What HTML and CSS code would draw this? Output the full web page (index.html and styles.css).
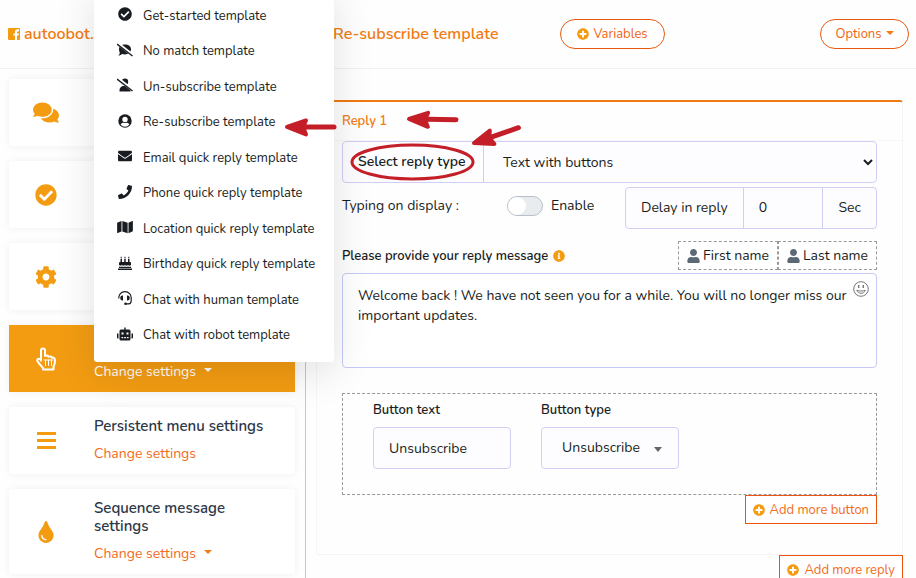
FILE: index.html
```html
<!DOCTYPE html>
<html lang="en">
<head>
    <meta charset="UTF-8">
    <meta name="viewport" content="width=device-width, initial-scale=1.0">
    <title>Re-subscribe template</title>
    <link rel="stylesheet" href="styles.css">
</head>
<body>
    <!-- Shared icons -->
    <svg class="sprite" aria-hidden="true">
        <symbol id="i-check" viewBox="0 0 512 512"><path d="M504 256c0 136.967-111.033 248-248 248S8 392.967 8 256 119.033 8 256 8s248 111.033 248 248zM227.314 387.314l184-184c6.248-6.248 6.248-16.379 0-22.627l-22.627-22.627c-6.248-6.249-16.379-6.249-22.628 0L216 308.118l-70.059-70.059c-6.248-6.248-16.379-6.248-22.628 0l-22.627 22.627c-6.248 6.248-6.248 16.379 0 22.627l104 104c6.249 6.249 16.379 6.249 22.628.001z"/></symbol>
        <symbol id="i-plus" viewBox="0 0 512 512"><path d="M256 8C119 8 8 119 8 256s111 248 248 248 248-111 248-248S393 8 256 8zm144 276c0 6.600-5.400 12-12 12h-92v92c0 6.600-5.400 12-12 12h-56c-6.600 0-12-5.400-12-12v-92h-92c-6.600 0-12-5.400-12-12v-56c0-6.600 5.400-12 12-12h92v-92c0-6.600 5.400-12 12-12h56c6.600 0 12 5.400 12 12v92h92c6.600 0 12 5.400 12 12v56z"/></symbol>
        <symbol id="i-user" viewBox="0 0 448 512"><path d="M224 256c70.700 0 128-57.300 128-128S294.700 0 224 0 96 57.300 96 128s57.300 128 128 128zm89.600 32h-16.700c-22.200 10.200-46.900 16-72.900 16s-50.600-5.800-72.900-16h-16.700C60.200 288 0 348.200 0 422.400V464c0 26.500 21.500 48 48 48h352c26.500 0 48-21.500 48-48v-41.600c0-74.200-60.200-134.400-134.400-134.400z"/></symbol>
    </svg>

    <header class="topbar">
        <a class="brand" href="#">
            <svg class="brand-icon" viewBox="0 0 24 24"><path fill-rule="evenodd" d="M2 0h20a2 2 0 0 1 2 2v20a2 2 0 0 1-2 2h-4v-9h3l1-4h-4V9c0-1 1-2 2-2h2V3c-5-1-8 1-8 5v3h-3v4h3v9H2a2 2 0 0 1-2-2V2a2 2 0 0 1 2-2z"/></svg>
            autoobot.
        </a>
        <h1 class="page-title">Re-subscribe template</h1>
        <button class="pill" type="button"><svg class="icon-sm"><use href="#i-plus"/></svg> Variables</button>
        <button class="pill pill-options" type="button">Options <span class="caret"></span></button>
    </header>

    <div class="layout">
        <aside class="sidebar">
            <div class="card">
                <div class="card-icon"><svg width="26" height="23" viewBox="0 0 576 512"><path d="M416 192c0-88.400-93.100-160-208-160S0 103.600 0 192c0 34.300 14.100 65.900 38 92-13.400 30.200-35.500 54.200-35.800 54.500-2.200 2.300-2.800 5.700-1.500 8.700S4.800 352 8 352c36.600 0 66.900-12.300 88.700-25 32.200 15.700 70.300 25 111.300 25 114.900 0 208-71.600 208-160zm122 220c23.900-26 38-57.700 38-92 0-66.900-53.500-124.200-129.300-148.100.9 6.600 1.300 13.300 1.300 20.100 0 105.900-107.700 192-240 192-10.800 0-21.300-.8-31.700-1.900C207.800 439.600 281.800 480 368 480c41 0 79.100-9.200 111.300-25 21.800 12.700 52.100 25 88.700 25 3.200 0 6.100-1.900 7.300-4.800 1.300-2.900.7-6.300-1.500-8.700-.3-.3-22.400-24.200-35.800-54.500z"/></svg></div>
            </div>
            <div class="card">
                <div class="card-icon"><svg width="22" height="22"><use href="#i-check"/></svg></div>
            </div>
            <div class="card">
                <div class="card-icon"><svg width="22" height="22" viewBox="0 0 512 512"><path d="M487.400 315.700l-42.600-24.600c4.300-23.200 4.300-47 0-70.200l42.600-24.600c4.900-2.800 7.100-8.600 5.500-14-11.100-35.600-30-67.800-54.700-94.600-3.800-4.100-10-5.100-14.800-2.300L380.800 110c-17.900-15.400-38.500-27.300-60.800-35.100V25.800c0-5.600-3.900-10.500-9.400-11.700-36.700-8.200-74.300-7.800-109.200 0-5.500 1.200-9.400 6.100-9.400 11.700V75c-22.200 7.900-42.800 19.800-60.800 35.100L88.700 85.500c-4.900-2.800-11-1.900-14.800 2.300-24.700 26.700-43.600 58.900-54.700 94.600-1.700 5.400.6 11.200 5.500 14L67.300 221c-4.300 23.200-4.300 47 0 70.200l-42.600 24.600c-4.900 2.800-7.100 8.600-5.500 14 11.100 35.600 30 67.800 54.700 94.600 3.800 4.100 10 5.100 14.800 2.300l42.600-24.600c17.900 15.400 38.500 27.300 60.800 35.100v49.200c0 5.600 3.900 10.500 9.400 11.700 36.700 8.200 74.300 7.800 109.200 0 5.500-1.200 9.400-6.100 9.400-11.700v-49.200c22.200-7.900 42.800-19.800 60.800-35.100l42.600 24.600c4.900 2.800 11 1.900 14.800-2.300 24.700-26.700 43.600-58.900 54.700-94.600 1.500-5.500-.7-11.300-5.600-14.100zM256 336c-44.100 0-80-35.900-80-80s35.900-80 80-80 80 35.900 80 80-35.900 80-80 80z"/></svg></div>
            </div>
            <div class="card card-active">
                <div class="card-icon"><svg width="22" height="24" viewBox="0 0 22 24" fill="none" stroke="#fff" stroke-width="2" stroke-linejoin="round" stroke-linecap="round"><path d="M6 13V3.500a2 2 0 0 1 4 0V9c1.500-1 3-.6 3.500.8 1.500-.8 3-.3 3.300 1 1.700-.6 3.200.3 3.200 2.200 0 4-1 5-1.500 7v2.500H8V21c-1.500-2-4-4.300-5.500-6.800-1-2 1.200-3.600 3.500-1.200z"/><path stroke-width="1" d="M6 12.500v2M10.500 13v5.500M13.500 13v5.500M16.500 13v5.500M9 13h9"/></svg></div>
                <div class="card-body">
                    <button class="card-link" type="button">Change settings <span class="caret"></span></button>
                </div>
                <nav class="dropdown">
                    <a href="#"><svg><use href="#i-check"/></svg>Get-started template</a>
                    <a href="#"><svg class="wide" viewBox="0 0 16 13"><path d="M8 1c3.500 0 6 2 6 4.800S11.500 11 8 11c-1 0-2-.2-2.800-.5C4.200 11.300 3 12 1.500 12c.8-1 1.300-1.800 1.300-2.800C2.200 8.300 2 7 2 5.800 2 3 4.500 1 8 1z"/><path stroke="#fff" stroke-width="3" d="M1 0l15 12"/><path stroke="#191d21" stroke-width="1.400" d="M0 .5L15.500 12.500"/></svg>No match template</a>
                    <a href="#"><svg class="wide" viewBox="0 0 16 13"><circle cx="8" cy="3.200" r="3.200"/><path d="M2.500 13v-1.500c0-2.200 1.800-4 4-4h3c2.200 0 4 1.800 4 4V13z"/><path stroke="#fff" stroke-width="3" d="M1 0l15 12"/><path stroke="#191d21" stroke-width="1.400" d="M0 .5L15.500 12.500"/></svg>Un-subscribe template</a>
                    <a href="#"><svg viewBox="0 0 14 14"><circle cx="7" cy="7" r="6.700"/><circle cx="7" cy="5.500" r="2.700" fill="#fff"/><path fill="#fff" d="M2.600 10.500C3.300 9.200 4.500 8.700 5.500 8.800c1 .4 2 .4 3 0 1-.1 2.200.4 2.900 1.700a5.300 5.300 0 0 1-8.800 0z"/></svg>Re-subscribe template</a>
                    <a href="#"><svg viewBox="0 0 512 512"><path d="M502.300 190.800c3.900-3.100 9.700-.2 9.700 4.700V400c0 26.500-21.500 48-48 48H48c-26.500 0-48-21.500-48-48V195.600c0-5 5.700-7.800 9.700-4.700 22.400 17.400 52.100 39.500 154.100 113.600 21.100 15.400 56.700 47.800 92.200 47.600 35.700.3 72-32.800 92.300-47.600 102-74.100 131.600-96.300 154-113.700zM256 320c23.200.4 56.600-29.200 73.400-41.400 132.700-96.300 142.800-104.700 173.400-128.700 5.800-4.500 9.200-11.500 9.200-18.900v-19c0-26.500-21.500-48-48-48H48c-26.500 0-48 21.500-48 48v19c0 7.400 3.400 14.300 9.200 18.900 30.600 23.900 40.700 32.400 173.400 128.700 16.800 12.200 50.200 41.800 73.400 41.400z"/></svg>Email quick reply template</a>
                    <a href="#"><svg viewBox="0 0 512 512"><path d="M493.400 24.600l-104-24c-11.300-2.600-22.900 3.300-27.500 13.900l-48 112c-4.200 9.800-1.400 21.300 6.900 28l60.600 49.600c-36 76.700-98.900 140.500-177.200 177.200l-49.600-60.600c-6.800-8.300-18.200-11.100-28-6.900l-112 48C3.900 366.500-2 378.100.6 389.400l24 104C27.100 504.200 36.700 512 48 512c256.100 0 464-207.500 464-464 0-11.200-7.700-20.900-18.600-23.400z"/></svg>Phone quick reply template</a>
                    <a href="#"><svg class="wide" viewBox="0 0 576 512"><path d="M0 117.660v346.320c0 11.320 11.430 19.060 21.940 14.860L160 416V32L20.120 87.950A32.006 32.006 0 0 0 0 117.660zM192 416l192 64V96L192 32v384zM554.060 33.160L416 96v384l139.880-55.950A31.996 31.996 0 0 0 576 394.340V48.020c0-11.320-11.430-19.060-21.940-14.860z"/></svg>Location quick reply template</a>
                    <a href="#"><svg viewBox="0 0 14 14"><path d="M2.500 3h1.500v3h2.200V3h1.500v3H10V3h1.500v3h.5a1 1 0 0 1 1 1v2c-1 1-2 1-3 0-1 1-2 1-3 0-1 1-2 1-3 0-1 1-2 1-3 0V7a1 1 0 0 1 1-1h.5zM1 10.500c1 .6 2 .6 3 0 1 .6 2 .6 3 0 1 .6 2 .6 3 0 1 .6 2 .6 3 0V12H1zM0 12.500h14V14H0zM2.700 2.500V.8h1v1.700zM6.500 2.500V.8h1v1.700zM10.300 2.500V.8h1v1.700z"/></svg>Birthday quick reply template</a>
                    <a href="#"><svg viewBox="0 0 14 14"><path fill="none" stroke="#191d21" stroke-width="1.200" d="M.8 7.500C.5 3.500 3.200.7 7 .7s6.500 2.800 6.200 6.800v2.300c0 1.700-1 3-2.500 3H7.500"/><path d="M5 4.500v5H4A2 2 0 0 1 2.300 7.500V6.500A2 2 0 0 1 4 4.500zM9 4.500v5h1a2 2 0 0 0 1.700-2V6.500a2 2 0 0 0-1.700-2z"/><circle cx="7.500" cy="12.700" r="1.300"/></svg>Chat with human template</a>
                    <a href="#"><svg class="wide" viewBox="0 0 16 13"><path fill-rule="evenodd" d="M7.300 0h1.400v2H12a1.500 1.500 0 0 1 1.500 1.500v8A1.500 1.500 0 0 1 12 13H4a1.500 1.500 0 0 1-1.500-1.500v-8A1.500 1.500 0 0 1 4 2h3.300zM4.500 5v2h2V5zM9.500 5v2h2V5zM4.500 9.500v1.200h1.700V9.500zM7.200 9.500v1.200h1.700V9.500zM9.900 9.500v1.200h1.700V9.500zM0 6h1.500v5H.8a.8.8 0 0 1-.8-.8zM14.500 6H16v4.200a.8.8 0 0 1-.8.8h-.7z"/></svg>Chat with robot template</a>
                </nav>
            </div>
            <div class="card">
                <div class="card-icon"><svg width="19" height="18" viewBox="0 0 19 18"><path d="M0 0h19v3H0zM0 7h19v3H0zM0 14h19v3H0z"/></svg></div>
                <div class="card-body">
                    <h2 class="card-title">Persistent menu settings</h2>
                    <a class="card-link" href="#">Change settings</a>
                </div>
            </div>
            <div class="card">
                <div class="card-icon"><svg width="16" height="22" viewBox="0 0 352 512"><path d="M205.220 22.090c-7.940-28.780-49.440-30.120-58.440 0C100.010 179.850 0 222.720 0 333.910 0 432.350 78.720 512 176 512s176-79.650 176-178.090c0-111.750-99.790-153.340-146.780-311.820zM176 448c-61.750 0-112-50.250-112-112 0-8.840 7.160-16 16-16s16 7.160 16 16c0 44.110 35.890 80 80 80 8.840 0 16 7.160 16 16s-7.160 16-16 16z"/></svg></div>
                <div class="card-body">
                    <h2 class="card-title">Sequence message settings</h2>
                    <button class="card-link" type="button">Change settings <span class="caret"></span></button>
                </div>
            </div>
        </aside>

        <main class="content">
            <section class="reply">
                <h2 class="reply-title">Reply 1</h2>
                <div class="reply-body">
                    <div class="group">
                        <label class="addon addon-bold" for="replyType">Select reply type</label>
                        <select class="group-select" id="replyType">
                            <option>Text with buttons</option>
                        </select>
                    </div>

                    <div class="typing-row">
                        <span class="typing-label">Typing on display :</span>
                        <label class="switch">
                            <input type="checkbox">
                            <span class="track"></span>
                            Enable
                        </label>
                        <div class="group delay">
                            <label class="addon" for="delay">Delay in reply</label>
                            <input class="group-input" id="delay" type="text" value="0">
                            <span class="addon">Sec</span>
                        </div>
                    </div>

                    <div class="message-head">
                        <label class="field-label" for="message">Please provide your reply message
                            <svg class="icon-sm" viewBox="0 0 512 512"><path d="M256 8C119.043 8 8 119.083 8 256c0 136.997 111.043 248 248 248s248-111.003 248-248C504 119.083 392.957 8 256 8zm0 110c23.196 0 42 18.804 42 42s-18.804 42-42 42-42-18.804-42-42 18.804-42 42-42zm56 254c0 6.627-5.373 12-12 12h-88c-6.627 0-12-5.373-12-12v-24c0-6.627 5.373-12 12-12h12v-64h-12c-6.627 0-12-5.373-12-12v-24c0-6.627 5.373-12 12-12h64c6.627 0 12 5.373 12 12v100h12c6.627 0 12 5.373 12 12v24z"/></svg>
                        </label>
                        <div class="name-buttons">
                            <button type="button"><svg><use href="#i-user"/></svg>First name</button>
                            <button type="button"><svg><use href="#i-user"/></svg>Last name</button>
                        </div>
                    </div>
                    <div class="message">
                        <textarea id="message">Welcome back ! We have not seen you for a while. You will no longer miss our important updates.</textarea>
                        <button class="emoji" type="button" aria-label="Emoji"><svg viewBox="0 0 16 16" fill="none" stroke="#777"><circle cx="8" cy="8" r="7.300"/><path d="M5.700 4v3M10.300 4v3" stroke-width="1.400"/><path d="M3.800 9.300c1.200 4 7.200 4 8.400 0-2.400 1-6 1-8.400 0z"/></svg></button>
                    </div>

                    <div class="button-box">
                        <div class="field">
                            <label class="field-label" for="buttonText">Button text</label>
                            <input class="control" id="buttonText" type="text" value="Unsubscribe">
                        </div>
                        <div class="field">
                            <label class="field-label" for="buttonType">Button type</label>
                            <div class="select-wrap">
                                <select class="control" id="buttonType">
                                    <option>Unsubscribe</option>
                                </select>
                            </div>
                        </div>
                    </div>
                    <button class="add-button" type="button"><svg class="icon-sm"><use href="#i-plus"/></svg> Add more button</button>
                </div>
            </section>
            <button class="add-button" type="button"><svg class="icon-sm"><use href="#i-plus"/></svg> Add more reply</button>
        </main>
    </div>

    <!-- Hint arrows drawn over the page -->
    <svg class="hints" aria-hidden="true">
        <ellipse cx="412.500" cy="162" rx="60.500" ry="17"/>
        <g id="arrow"><path class="shaft" d="M306 127H334"/><path class="head" d="M287 127L306 120.500Q302 127 306 134.500Z"/></g>
        <use href="#arrow" transform="translate(122 -8) rotate(1 287 127)"/>
        <use href="#arrow" transform="translate(187 16) rotate(-19 287 127)"/>
    </svg>
</body>
</html>
```
FILE: styles.css
```css
* {
    box-sizing: border-box;
}

body {
    margin: 0;
    background: #fefefe;
    color: #191d21;
    font-family: "Nunito", "Open Sans", sans-serif;
    font-size: 14px;
    line-height: 20px;
}

button, input, select, textarea {
    margin: 0;
    font: inherit;
    color: inherit;
}

button {
    cursor: pointer;
}

a {
    text-decoration: none;
}

svg {
    flex-shrink: 0;
}

.sprite {
    display: none;
}

.icon-sm {
    width: 12px;
    height: 12px;
    fill: #f39c12;
}

.caret {
    margin-bottom: 3px;
    border: 4px solid transparent;
    border-top-color: currentColor;
    border-bottom: 0;
}

/* Top bar */
.topbar {
    display: flex;
    align-items: center;
    height: 69px;
    padding: 0 7px 0 8px;
    border-bottom: 1px solid #f2f2f4;
}

.brand {
    display: flex;
    align-items: center;
    gap: 4px;
    width: 325px;
    color: #f07c12;
    font-size: 16px;
    font-weight: 600;
}

.brand-icon {
    width: 12px;
    height: 12px;
    fill: #f39c12;
}

.page-title {
    margin: 0;
    width: 227px;
    color: #f07c12;
    font-size: 16px;
    font-weight: 600;
    white-space: nowrap;
}

.pill {
    display: flex;
    align-items: center;
    justify-content: center;
    gap: 4px;
    width: 105px;
    height: 30px;
    border: 1px solid #e9590c;
    border-radius: 15px;
    background: #fff;
    color: #f06414;
    font-size: 13px;
}

.pill-options {
    width: 89px;
    margin-left: auto;
}

.pill-options .caret {
    color: #f07c12;
}

.layout {
    display: grid;
    grid-template-columns: 306px 1fr;
}

/* Sidebar */
.sidebar {
    display: flex;
    flex-direction: column;
    gap: 15px;
    padding: 10px 10px 4px 9px;
    border-right: 1px solid #c3c6ca;
}

.card {
    position: relative;
    display: flex;
    align-items: center;
    min-height: 67px;
    padding: 10px 15px 10px 0;
    border-radius: 3px;
    background: #fff;
    box-shadow: 0 0 8px rgba(0, 0, 0, 0.06);
}

.card-icon {
    display: flex;
    justify-content: center;
    flex: 0 0 74px;
    fill: #f39c12;
}

.card-body {
    padding-left: 11px;
}

.card-title {
    margin: 0 0 8px;
    color: #2d3748;
    font-size: 15px;
    font-weight: 600;
    line-height: 18px;
}

.card-link {
    display: flex;
    align-items: center;
    gap: 8px;
    padding: 0;
    border: 0;
    background: none;
    color: #f06c1c;
    line-height: 21px;
}

.card-link .caret {
    color: #f07c12;
}

.card-active {
    border-radius: 0;
    background: #f39c12;
}

.card-active .card-body {
    align-self: flex-end;
}

.card-active .card-link,
.card-active .caret {
    color: #fff;
}

/* Template menu, opens upwards from the active card */
.dropdown {
    position: absolute;
    z-index: 2;
    left: 85px;
    bottom: 30px;
    display: grid;
    grid-template-rows: repeat(10, 1fr);
    width: 240px;
    height: 375px;
    padding: 11px 0 9px;
    border-radius: 3px;
    background: #fff;
    box-shadow: 0 10px 40px rgba(0, 0, 0, 0.12);
}

.dropdown a {
    display: grid;
    grid-template-columns: 16px 1fr;
    align-items: center;
    gap: 10px;
    padding-left: 23px;
    color: #191d21;
    font-size: 13px;
    white-space: nowrap;
}

.dropdown svg {
    width: 14px;
    height: 14px;
    margin-bottom: 3px;
    justify-self: center;
    fill: #191d21;
}

.dropdown .wide {
    width: 16px;
}

/* Reply editor */
.content {
    display: flex;
    flex-direction: column;
    align-items: flex-end;
    padding: 31px 13px 10px 10px;
}

.reply {
    align-self: stretch;
    border: 1px solid #f5f5f7;
    border-top: 2px solid #ee7a10;
    border-radius: 3px;
}

.reply-title {
    margin: 0;
    padding: 9px 25px;
    color: #f07c12;
    font-size: 13px;
    font-weight: 600;
    border-bottom: 1px solid #f7f7f7;
}

.reply-body {
    display: flex;
    flex-direction: column;
    padding: 0 25px 30px;
}

.group {
    display: flex;
    height: 42px;
    border: 1px solid #cfcff5;
    border-radius: 4px;
    background: #fdfdff;
    overflow: hidden;
}

.addon {
    display: flex;
    align-items: center;
    padding: 0 15px;
    white-space: nowrap;
}

.addon-bold {
    width: 140px;
    font-weight: 600;
}

.group-select,
.group-input {
    flex: 1;
    min-width: 0;
    padding: 0 15px;
    border: 0;
    border-left: 1px solid #cfcff5;
    background: transparent;
}

.group-select {
    padding-right: 0;
}

.group-input {
    border-right: 1px solid #cfcff5;
}

.typing-row {
    display: flex;
    align-items: flex-start;
    margin-top: 4px;
}

.typing-label {
    width: 165px;
    line-height: 38px;
}

.switch {
    display: flex;
    align-items: center;
    gap: 8px;
    height: 38px;
}

.switch input {
    position: absolute;
    opacity: 0;
}

.track {
    display: flex;
    align-items: center;
    width: 36px;
    height: 20px;
    border: 1px solid #b9bfc9;
    border-radius: 10px;
    background: #e9ecef;
}

.track::before {
    content: "";
    width: 18px;
    height: 18px;
    border-radius: 50%;
    background: #fff;
}

.switch input:checked + .track {
    justify-content: flex-end;
    background: #f39c12;
}

.delay {
    width: 252px;
    margin-left: auto;
}

.message-head {
    display: flex;
    align-items: center;
    justify-content: space-between;
    margin-top: 12px;
}

.field-label {
    display: flex;
    align-items: center;
    gap: 5px;
    font-size: 13px;
    font-weight: 600;
}

.name-buttons {
    display: flex;
}

.name-buttons button {
    display: flex;
    align-items: center;
    gap: 3px;
    height: 29px;
    padding: 0 8px;
    border: 1px dashed #999;
    background: #fff;
}

.name-buttons svg {
    width: 13px;
    height: 14px;
    fill: #5d6875;
}

.message {
    position: relative;
    margin-top: 3px;
}

.message textarea {
    display: block;
    width: 100%;
    height: 95px;
    padding: 12px 28px 12px 15px;
    border: 1px solid #c6c9f5;
    border-radius: 4px;
    background: #fff;
    resize: none;
}

.emoji {
    position: absolute;
    top: 8px;
    right: 8px;
    width: 16px;
    height: 16px;
    padding: 0;
    border: 0;
    background: none;
}

.emoji svg {
    display: block;
}

.button-box {
    display: flex;
    gap: 30px;
    margin-top: 25px;
    padding: 6px 30px 25px;
    border: 1px dashed #999;
}

.field {
    width: 138px;
}

.control {
    width: 100%;
    height: 42px;
    margin-top: 7px;
    padding: 0 15px;
    border: 1px solid #cfcff5;
    border-radius: 4px;
    background: #fdfdff;
}

.select-wrap {
    position: relative;
}

.select-wrap .control {
    padding-left: 20px;
    appearance: none;
}

.select-wrap::after {
    content: "";
    position: absolute;
    right: 17px;
    bottom: 17px;
    border: 4px solid transparent;
    border-top: 5px solid #666;
    border-bottom: 0;
    pointer-events: none;
}

.add-button {
    display: flex;
    align-items: center;
    align-self: flex-end;
    gap: 5px;
    height: 29px;
    padding: 0 7px;
    border: 1px solid #ee5310;
    background: #fff;
    color: #f06c1c;
    font-size: 13px;
}

/* Hint arrows */
.hints {
    position: absolute;
    z-index: 3;
    top: 0;
    left: 0;
    width: 560px;
    height: 200px;
    fill: none;
    stroke: #c41e28;
    stroke-width: 3;
    pointer-events: none;
}

.hints .shaft {
    stroke-width: 5;
    stroke-linecap: round;
}

.hints .head {
    fill: #c41e28;
    stroke-width: 4;
    stroke-linejoin: round;
}
```
